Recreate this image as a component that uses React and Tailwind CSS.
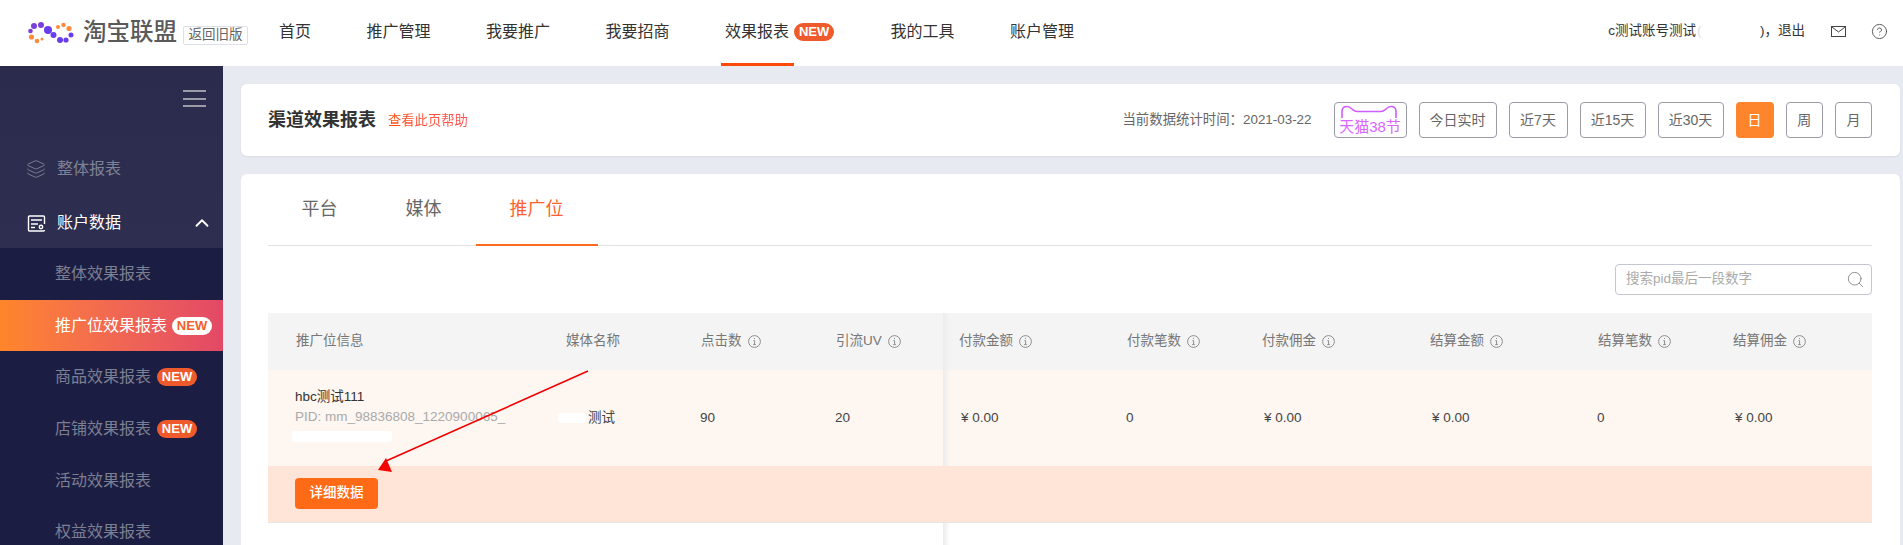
import { ChevronUp, CircleHelp, Layers, Search } from "lucide-react";

const NAV = ["首页", "推广管理", "我要推广", "我要招商"];
const NAV_AFTER = ["我的工具", "账户管理"];

const SUB_MENU = [
  { label: "整体效果报表" },
  { label: "推广位效果报表", active: true },
  { label: "商品效果报表", isNew: true },
  { label: "店铺效果报表", isNew: true },
  { label: "活动效果报表" },
  { label: "权益效果报表" },
];

const RANGES = [
  { label: "今日实时", w: "w-[78px]" },
  { label: "近7天", w: "w-[59px]" },
  { label: "近15天", w: "w-[66px]" },
  { label: "近30天", w: "w-[66px]" },
  { label: "日", w: "w-[38px]", active: true },
  { label: "周", w: "w-[37.5px]" },
  { label: "月", w: "w-[37px]" },
];

const COLUMNS = [
  { title: "点击数", value: "90", cell: "pl-[27px]" },
  { title: "引流UV", value: "20", cell: "pl-[27px]" },
  { title: "付款金额", value: "¥ 0.00", cell: "pl-[18px]" },
  { title: "付款笔数", value: "0", cell: "pl-[15px]" },
  { title: "付款佣金", value: "¥ 0.00", cell: "pl-[18px]" },
  { title: "结算金额", value: "¥ 0.00", cell: "pl-[18px]" },
  { title: "结算笔数", value: "0", cell: "pl-[15px]" },
  { title: "结算佣金", value: "¥ 0.00", cell: "pl-[18px]" },
];

const GRID = "grid grid-cols-[270px_135px_135px_135px_168px_135px_168px_168px_135px_155px]";

function Logo() {
  return (
    <svg width="46" height="22" viewBox="28 18 46 22" className="shrink-0">
      <circle cx="34" cy="22" r="3" fill="#7a3fd8" />
      <circle cx="41" cy="21" r="3" fill="#7a3fd8" />
      <circle cx="30.5" cy="27" r="2.3" fill="#7a3fd8" />
      <circle cx="48" cy="26" r="4" fill="#6a3cf0" />
      <circle cx="53.5" cy="31" r="3" fill="#6a3cf0" />
      <circle cx="60" cy="36" r="3" fill="#6a3cf0" />
      <circle cx="66" cy="36" r="2.6" fill="#6a3cf0" />
      <circle cx="71" cy="31" r="2.5" fill="#6a3cf0" />
      <circle cx="31.5" cy="33" r="2.6" fill="#ff8a3c" />
      <circle cx="37" cy="37" r="2.3" fill="#ff8a3c" />
      <circle cx="42" cy="35" r="1.5" fill="#ff8a3c" />
      <circle cx="58" cy="23" r="2" fill="#ff8a3c" />
      <circle cx="63.5" cy="21" r="2.2" fill="#ff8a3c" />
      <circle cx="69" cy="24.5" r="2.6" fill="#ff8a3c" />
    </svg>
  );
}

function NewBadge({ white }) {
  return (
    <span
      className={`flex h-[18px] w-[40px] items-center justify-center rounded-[9px] text-[13px] font-bold ${
        white ? "bg-white text-[#f4602c]" : "bg-[#ee5a2b] text-white"
      }`}
    >
      NEW
    </span>
  );
}

function InfoIcon() {
  return (
    <svg width="13" height="13" viewBox="0 0 13 13" fill="none" stroke="#8d8d8d" className="ml-[6px] shrink-0">
      <circle cx="6.5" cy="6.5" r="5.9" />
      <path d="M5.4 5.6h1.2v4M5.2 9.6h2.6M6.5 3v1" />
    </svg>
  );
}

function AccountIcon() {
  return (
    <svg width="19" height="17" viewBox="0 0 19 17" fill="none" stroke="white" strokeWidth="1.4" className="shrink-0">
      <path d="M17.5 9V2a1 1 0 0 0-1-1h-14a1 1 0 0 0-1 1v13a1 1 0 0 0 1 1h14a1 1 0 0 0 1-1" />
      <path d="M4 5h11M4 9h7M4 12.5h4" />
      <circle cx="14" cy="12" r="1.7" />
    </svg>
  );
}

function CatBadge() {
  return (
    <div className="flex h-[36px] w-[73px] shrink-0 flex-col items-center rounded border border-[#9a9aa8] pt-[2px]">
      <svg width="58" height="13" viewBox="0 0 58 13" fill="none" stroke="#cf5dff" strokeWidth="1.6" className="shrink-0">
        <path d="M1 13V6.5C1 3 3 1.5 6 1.5c3 0 4 1.6 6 3.4 1.4 1.2 2.5 1.6 4 1.6h24c1.5 0 2.6-.4 4-1.6 2-1.8 3-3.4 6-3.4 3 0 5 1.5 5 5V13" />
      </svg>
      <span className="text-[15px] leading-[18px] whitespace-nowrap text-[#db66ff]">天猫38节</span>
    </div>
  );
}

function Arrow() {
  return (
    <svg width="400" height="180" viewBox="0 0 400 180" className="pointer-events-none absolute top-0 left-0 z-20">
      <line x1="320" y1="58" x2="118" y2="148" stroke="#f40000" strokeWidth="1.6" />
      <polygon points="110,157 118,145 124,159" fill="#f40000" />
    </svg>
  );
}

export default function App() {
  return (
    <div className="flex h-[545px] w-[1903px] flex-col overflow-hidden bg-[#e8eaf2] font-['Liberation_Sans','Noto_Sans_CJK_SC',sans-serif] text-[#333]">
      {/* top bar */}
      <header className="flex h-[66px] shrink-0 items-center bg-white">
        <div className="ml-[28px] flex items-center">
          <Logo />
          <span className="ml-[9px] text-[23.5px] font-medium tracking-normal text-[#5a5a5a] whitespace-nowrap">淘宝联盟</span>
          <span className="mt-[4px] ml-[6px] flex h-[19px] w-[65px] items-center justify-center rounded-[2px] border border-[#dde0e8] text-[13.5px] whitespace-nowrap text-[#666]">
            返回旧版
          </span>
        </div>
        <nav className="ml-[31px] flex h-full items-center gap-[55.5px] text-[16px] text-[#333]">
          {NAV.map((n) => (
            <a key={n} className="pb-[3px] whitespace-nowrap">{n}</a>
          ))}
          <a className="relative flex h-full items-center pr-[46px] pb-[3px] whitespace-nowrap">
            效果报表
            <span className="absolute top-[23px] left-[69px]"><NewBadge /></span>
            <span className="absolute bottom-0 -left-[4px] h-[3px] w-[73px] bg-[#ff4a0c]" />
          </a>
          {NAV_AFTER.map((n) => (
            <a key={n} className="pb-[3px] whitespace-nowrap">{n}</a>
          ))}
        </nav>
        <div className="mr-[15px] ml-auto flex items-center pb-[3px] text-[13.5px] text-[#333]">
          <span className="whitespace-nowrap">c测试账号测试</span>
          <span className="w-[64px] pl-[1px] text-[#ddd]">(</span>
          <span className="whitespace-nowrap">)，退出</span>
          <svg width="15" height="11" viewBox="0 0 15 11" fill="none" stroke="#444" className="ml-[26px]">
            <rect x=".5" y=".5" width="14" height="10" />
            <path d="M1 1l6.5 5L14 1" />
          </svg>
          <CircleHelp size={17} strokeWidth={1.2} color="#444" className="ml-[25px]" />
        </div>
      </header>

      <div className="flex min-h-0 flex-1">
        {/* side menu */}
        <aside className="w-[223px] shrink-0 bg-[#1b1e42]">
          <div className="h-[182px] bg-gradient-to-b from-[#2b2c4d] to-[#2e2f50]">
            <div className="flex flex-col items-end gap-[5.5px] pt-[24px] pr-[17px]">
              <span className="h-[2px] w-[23px] bg-[#9c9ca6]" />
              <span className="h-[2px] w-[23px] bg-[#9c9ca6]" />
              <span className="h-[2px] w-[23px] bg-[#9c9ca6]" />
            </div>
            <div className="mt-[50px] flex items-center pl-[26px] text-[16px] text-[#7e8296]">
              <Layers size={20} strokeWidth={1.1} />
              <span className="ml-[11px]">整体报表</span>
            </div>
            <div className="mt-[30px] flex items-center pl-[27px] text-[16px] text-white">
              <AccountIcon />
              <span className="ml-[11px]">账户数据</span>
              <ChevronUp size={22} strokeWidth={2} className="ml-[70px]" />
            </div>
          </div>
          {SUB_MENU.map((m) => (
            <div
              key={m.label}
              className={`flex h-[51.7px] items-center pl-[55px] text-[16px] whitespace-nowrap ${
                m.active
                  ? "bg-gradient-to-r from-[#ff8529] to-[#e34866] text-white"
                  : "text-[#7c7e92]"
              }`}
            >
              {m.label}
              {m.active && <span className="ml-[5px]"><NewBadge white /></span>}
              {m.isNew && <span className="ml-[6px]"><NewBadge /></span>}
            </div>
          ))}
        </aside>

        {/* content */}
        <main className="flex min-w-0 flex-1 flex-col gap-[18px] pt-[18px] pr-[3px] pl-[18px]">
          <div className="flex h-[72px] shrink-0 items-center rounded-md bg-white pr-[28px] pl-[27px] shadow-[0_1px_2px_#d8dae4]">
            <h2 className="text-[18px] font-bold text-[#333]">渠道效果报表</h2>
            <a className="mt-[2px] ml-[12px] bg-gradient-to-r from-[#ff4d00] to-[#ff5252] bg-clip-text text-[13.3px] text-transparent">查看此页帮助</a>
            <div className="ml-auto flex items-center gap-[12px]">
              <span className="mr-[10px] text-[13.4px] whitespace-nowrap text-[#666]">当前数据统计时间：2021-03-22</span>
              <CatBadge />
              {RANGES.map((r) => (
                <button
                  key={r.label}
                  className={`h-[36px] ${r.w} shrink-0 rounded text-[14px] whitespace-nowrap ${
                    r.active ? "bg-[#ff852d] text-white" : "border border-[#9a9aa8] text-[#666]"
                  }`}
                >
                  {r.label}
                </button>
              ))}
            </div>
          </div>

          <div className="flex min-h-0 flex-1 flex-col rounded-t-md bg-white pr-[28px] pl-[27px]">
            <div className="flex h-[72px] shrink-0 border-b border-[#e3e3e3]">
              <div className="flex h-[71px] items-center pr-[34px] pl-[33.5px] text-[18px] text-[#666]">平台</div>
              <div className="flex h-[71px] items-center px-[34px] text-[18px] text-[#666]">媒体</div>
              <div className="flex h-[72px] items-center border-b-2 border-[#ff6a1f] px-[34px] text-[18px] text-[#ff5f2e]">推广位</div>
            </div>

            <div className="flex shrink-0 justify-end pt-[18px] pb-[18px]">
              <div className="flex h-[31px] w-[257px] items-center justify-between rounded border border-[#c4c6d4] pr-[6px] pl-[10px]">
                <span className="text-[13.5px] text-[#aaa]">搜索pid最后一段数字</span>
                <Search size={19} strokeWidth={1} color="#777" />
              </div>
            </div>

            <div className="relative flex-1">
              <div className={`${GRID} h-[57px] items-center bg-[#f4f4f4] text-[13.5px] text-[#777]`}>
                <div className="pl-[28px]">推广位信息</div>
                <div className="pl-[28px]">媒体名称</div>
                {COLUMNS.map((c, i) => (
                  <div key={c.title} className={`flex items-center ${i < 2 ? "pl-[28px]" : "pl-[16px]"}`}>
                    {c.title}
                    <InfoIcon />
                  </div>
                ))}
              </div>

              <div className={`${GRID} h-[96px] items-center bg-[#fdf6f1] text-[13.5px] leading-[20px] text-[#444]`}>
                <div className="pl-[27px] whitespace-nowrap">
                  <div className="text-[#333]">hbc测试111</div>
                  <div className="text-[#aaa]">PID: mm_98836808_1220900065_</div>
                  <div className="mt-[4px] mb-[7px] -ml-[3px] h-[11px] w-[100px] rounded-[3px] bg-white" />
                </div>
                <div className="flex items-center pl-[28px]">
                  <span className="mr-[2px] -ml-[8px] h-[10px] w-[28px] rounded-[3px] bg-white" />
                  测试
                </div>
                {COLUMNS.map((c) => (
                  <div key={c.title} className={c.cell}>{c.value}</div>
                ))}
              </div>

              <div className="relative z-10 flex h-[57px] items-start border-b border-[#e5e5e5] bg-[#ffe5d7] pt-[12px] pl-[27px]">
                <button className="h-[31px] w-[83px] rounded bg-[#ff6a17] text-[13.5px] font-medium text-white">详细数据</button>
              </div>

              <div className="absolute top-0 bottom-0 left-[675px] w-[7px] bg-gradient-to-r from-[#ececec] to-transparent" />
              <Arrow />
            </div>
          </div>
        </main>
      </div>
    </div>
  );
}
